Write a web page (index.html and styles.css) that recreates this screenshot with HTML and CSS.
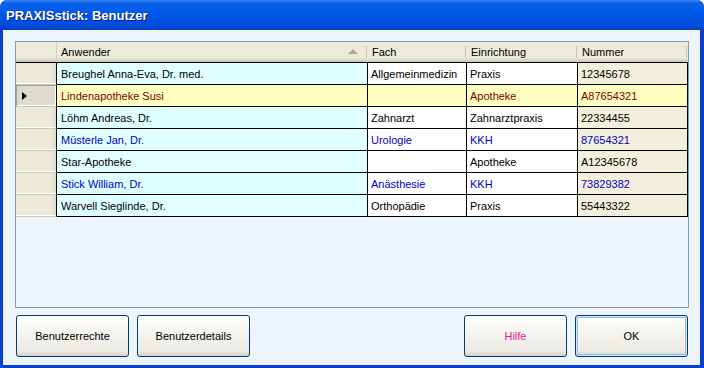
FILE: index.html
```html
<!DOCTYPE html>
<html lang="de">
<head>
    <meta charset="UTF-8">
    <title>PRAXISstick: Benutzer</title>
    <link rel="stylesheet" href="styles.css">
</head>
<body>

<div class="window">
    <div class="titlebar">PRAXISstick: Benutzer</div>

    <div class="client">
        <div class="grid">
            <div class="row head">
                <div class="rowhead"></div>
                <div class="hcell">Anwender <span class="sort"></span></div>
                <div class="hcell">Fach</div>
                <div class="hcell">Einrichtung</div>
                <div class="hcell">Nummer</div>
            </div>

            <div class="row first">
                <div class="rowhead"></div>
                <div class="cell name">Breughel Anna-Eva, Dr. med.</div>
                <div class="cell">Allgemeinmedizin</div>
                <div class="cell">Praxis</div>
                <div class="cell num">12345678</div>
            </div>
            <div class="row selected">
                <div class="rowhead"><span class="marker"></span></div>
                <div class="cell name">Lindenapotheke Susi</div>
                <div class="cell"></div>
                <div class="cell">Apotheke</div>
                <div class="cell num">A87654321</div>
            </div>
            <div class="row">
                <div class="rowhead"></div>
                <div class="cell name">Löhm Andreas, Dr.</div>
                <div class="cell">Zahnarzt</div>
                <div class="cell">Zahnarztpraxis</div>
                <div class="cell num">22334455</div>
            </div>
            <div class="row blue">
                <div class="rowhead"></div>
                <div class="cell name">Müsterle Jan, Dr.</div>
                <div class="cell">Urologie</div>
                <div class="cell">KKH</div>
                <div class="cell num">87654321</div>
            </div>
            <div class="row">
                <div class="rowhead"></div>
                <div class="cell name">Star-Apotheke</div>
                <div class="cell"></div>
                <div class="cell">Apotheke</div>
                <div class="cell num">A12345678</div>
            </div>
            <div class="row blue">
                <div class="rowhead"></div>
                <div class="cell name">Stick William, Dr.</div>
                <div class="cell">Anästhesie</div>
                <div class="cell">KKH</div>
                <div class="cell num">73829382</div>
            </div>
            <div class="row">
                <div class="rowhead"></div>
                <div class="cell name">Warvell Sieglinde, Dr.</div>
                <div class="cell">Orthopädie</div>
                <div class="cell">Praxis</div>
                <div class="cell num">55443322</div>
            </div>
        </div>

        <div class="buttons">
            <button>Benutzerrechte</button>
            <button>Benutzerdetails</button>
            <span class="spacer"></span>
            <button class="help">Hilfe</button>
            <button class="ok">OK</button>
        </div>
    </div>
</div>

</body>
</html>
```

FILE: styles.css
```css
body {
    margin: 0;
    font-family: "Liberation Sans", Arial, sans-serif;
    font-size: 11px;
    background: #ffffff;
}
.window {
    width: 704px;
    height: 368px;
    display: flex;
    flex-direction: column;
    background: #0a3fd0;
    border-radius: 7px 7px 0 0;
    overflow: hidden;
}
.titlebar {
    height: 30px;
    flex: none;
    box-sizing: border-box;
    padding: 8px 0 0 6px;
    color: #ffffff;
    font-weight: bold;
    font-size: 13px;
    text-shadow: 1px 1px 0 #0a1e70;
    background: linear-gradient(to bottom, #3d87f5 0%, #0a62ea 10%, #0058e8 45%, #004de0 80%, #0040c4 100%);
}
.client {
    flex: 1;
    display: flex;
    flex-direction: column;
    margin: 0 4px 4px 3px;
    padding: 11px 11px 8px 12px;
    background: #eef4fc;
}
.grid {
    height: 265px;
    border: 1px solid #7f9db9;
    background: #eef4fc;
}
.row {
    display: grid;
    grid-template-columns: 41px 311px 99px 111px 110px;
    height: 22px;
}
.row.first {
    border-top: 1px solid #000;
}
.row.head {
    height: 20px;
    background: linear-gradient(to bottom, #ebeadb 0%, #ebeadb 80%, #e2decd 85%, #d6d2c2 92%, #cbc7b8 100%);
}
.rowhead {
    box-sizing: border-box;
    background: #ece9d8;
    border-right: 1px solid #000;
    border-bottom: 1px solid #cbc7b8;
    box-shadow: inset 0 -1px 0 #ffffff, inset -3px 0 0 #e2decd;
    position: relative;
}
.head .rowhead {
    border-right: 1px solid #d6d2c2;
    border-bottom: none;
    background: transparent;
    box-shadow: none;
}
.selected .rowhead {
    background: #dedbcc;
    box-shadow: inset 1px 1px 0 #a5a294, inset -1px -1px 0 #ffffff;
}
.marker {
    position: absolute;
    left: 6px;
    top: 7px;
    border-left: 5px solid #000;
    border-top: 4px solid transparent;
    border-bottom: 4px solid transparent;
}
.hcell {
    display: flex;
    align-items: center;
    padding-left: 4px;
    border-right: 1px solid transparent;
    position: relative;
}
.hcell::after {
    content: "";
    position: absolute;
    right: 0;
    top: 4px;
    bottom: 4px;
    width: 1px;
    background: #c7c5b2;
}
.sort {
    position: absolute;
    right: 9px;
    top: 7px;
    border-bottom: 5px solid #aca899;
    border-left: 5px solid transparent;
    border-right: 5px solid transparent;
}
.cell {
    display: flex;
    align-items: center;
    padding-left: 3px;
    background: #ffffff;
    border-right: 1px solid #000;
    border-bottom: 1px solid #000;
    white-space: nowrap;
}
.cell.name {
    background: #e0ffff;
    padding-left: 4px;
}
.cell.num {
    background: #f2f0dc;
}
.selected .cell {
    background: #ffffc0;
    color: #800000;
}
.blue .cell {
    color: #0000cc;
}
.buttons {
    display: flex;
    gap: 8px;
    margin-top: 7px;
    padding-left: 1px;
}
.spacer {
    flex: 1;
}
button {
    width: 113px;
    height: 42px;
    font-family: "Liberation Sans", Arial, sans-serif;
    font-size: 11px;
    color: #000;
    border: 1px solid #003c74;
    border-radius: 3px;
    background: linear-gradient(to bottom, #ffffff 0%, #f5f4ee 40%, #ecebe4 85%, #d8d2c6 100%);
    padding: 0;
}
.help {
    width: 103px;
    color: #e8179a;
}
.ok {
    width: 113px;
    margin-right: 1px;
    box-shadow: inset 0 0 0 1px #cee7ff, inset 0 0 0 2px #98b8ea;
}
```
